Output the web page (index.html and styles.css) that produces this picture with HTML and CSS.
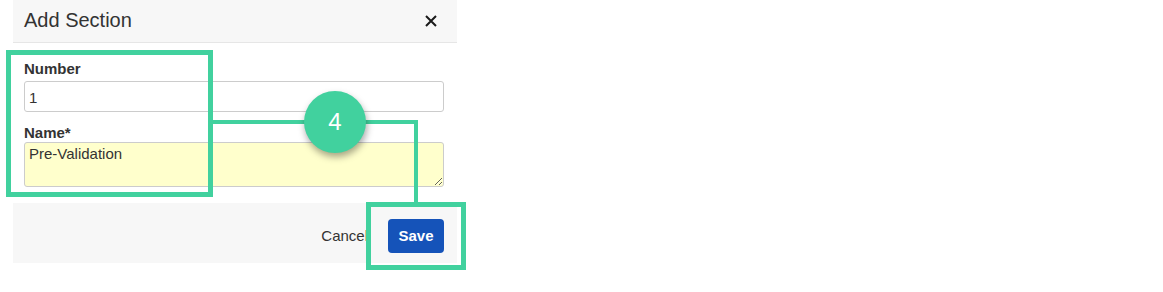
FILE: index.html
```html
<!DOCTYPE html>
<html lang="en">
<head>
<meta charset="utf-8">
<title>Add Section</title>
<link rel="stylesheet" href="styles.css">
</head>
<body>
<div class="page">
  <div class="modal">
    <div class="modal-header">
      <h4 class="modal-title">Add Section</h4>
      <button class="close" type="button" aria-label="Close">
        <svg width="12" height="12" viewBox="0 0 12 12" aria-hidden="true"><path d="M1 1 L11 11 M11 1 L1 11" stroke="#1a1a1a" stroke-width="2" fill="none"/></svg>
      </button>
    </div>
    <div class="modal-body">
      <div class="field">
        <label class="label" for="num">Number</label>
        <input class="input" id="num" type="text" value="1">
      </div>
      <div class="field">
        <label class="label label-tight" for="name">Name*</label>
        <textarea class="textarea" id="name">Pre-Validation</textarea>
      </div>
    </div>
    <div class="modal-footer">
      <button class="btn-link" type="button">Cancel</button>
      <button class="btn-primary" type="button">Save</button>
    </div>
  </div>

  <div class="callout callout-fields"></div>
  <div class="connector connector-h"></div>
  <div class="connector connector-v"></div>
  <div class="callout callout-save"></div>
  <div class="step-badge">4</div>
</div>
</body>
</html>
```

FILE: styles.css
```css
html, body {
  margin: 0;
  padding: 0;
  background: #ffffff;
}

body {
  font-family: "Liberation Sans", Arial, sans-serif;
  color: #333333;
}

.page {
  position: relative;
  width: 1163px;
  height: 292px;
}

.modal {
  margin-left: 13px;
  width: 444px;
  background: #ffffff;
}

.modal-header {
  box-sizing: border-box;
  height: 43px;
  display: flex;
  align-items: flex-start;
  justify-content: space-between;
  padding: 9px 20px 0 11px;
  background: #f7f7f7;
  border-bottom: 1px solid #e6e6e6;
}

.modal-title {
  margin: 0;
  font-size: 20px;
  line-height: 22px;
  font-weight: 400;
  color: #333333;
}

.close {
  margin: 6px 0 0 0;
  padding: 0;
  border: 0;
  background: transparent;
  width: 12px;
  height: 12px;
  display: flex;
}

.modal-body {
  padding: 17px 13px 16px 11px;
}

.field + .field {
  margin-top: 12px;
}

.label {
  display: block;
  font-size: 15px;
  line-height: 17px;
  font-weight: 700;
  color: #333333;
  margin-bottom: 4px;
}

.label-tight {
  margin-bottom: 1px;
}

.input,
.textarea {
  display: block;
  box-sizing: border-box;
  width: 420px;
  margin: 0;
  border: 1px solid #cccccc;
  border-radius: 3px;
  font-family: "Liberation Sans", Arial, sans-serif;
  font-size: 15px;
  color: #333333;
  outline: none;
}

.input {
  height: 31px;
  padding: 6px 4px 4px 4px;
  line-height: 19px;
  background: #ffffff;
}

.textarea {
  height: 45px;
  padding: 2px 4px 0 4px;
  line-height: 17px;
  background: #ffffcc;
  resize: both;
}

.modal-footer {
  box-sizing: border-box;
  height: 60px;
  display: flex;
  justify-content: flex-end;
  align-items: flex-start;
  padding: 16px 13px 0 0;
  background: #f7f7f7;
}

.btn-link {
  height: 34px;
  margin-right: 20px;
  padding: 0;
  border: 0;
  background: transparent;
  font-family: "Liberation Sans", Arial, sans-serif;
  font-size: 15px;
  line-height: 34px;
  color: #333333;
}

.btn-primary {
  width: 56px;
  height: 34px;
  padding: 0;
  border: 0;
  border-radius: 4px;
  background: #1553b9;
  color: #ffffff;
  font-family: "Liberation Sans", Arial, sans-serif;
  font-size: 15px;
  font-weight: 700;
  line-height: 34px;
}

/* Tutorial annotations overlaying the dialog */
.callout {
  position: absolute;
  box-sizing: border-box;
  border: 5px solid #41d19e;
}

.callout-fields {
  left: 6px;
  top: 50px;
  width: 207px;
  height: 147px;
}

.callout-save {
  left: 366px;
  top: 202px;
  width: 100px;
  height: 68px;
}

.connector {
  position: absolute;
  background: #41d19e;
}

.connector-h {
  left: 213px;
  top: 120px;
  width: 205px;
  height: 4px;
}

.connector-v {
  left: 414px;
  top: 120px;
  width: 4px;
  height: 82px;
}

.step-badge {
  position: absolute;
  left: 304px;
  top: 91px;
  width: 62px;
  height: 62px;
  border-radius: 50%;
  background: #41d19e;
  box-shadow: 1px 4px 7px rgba(0, 0, 0, 0.35);
  color: #ffffff;
  font-size: 24px;
  line-height: 62px;
  text-align: center;
}
```
